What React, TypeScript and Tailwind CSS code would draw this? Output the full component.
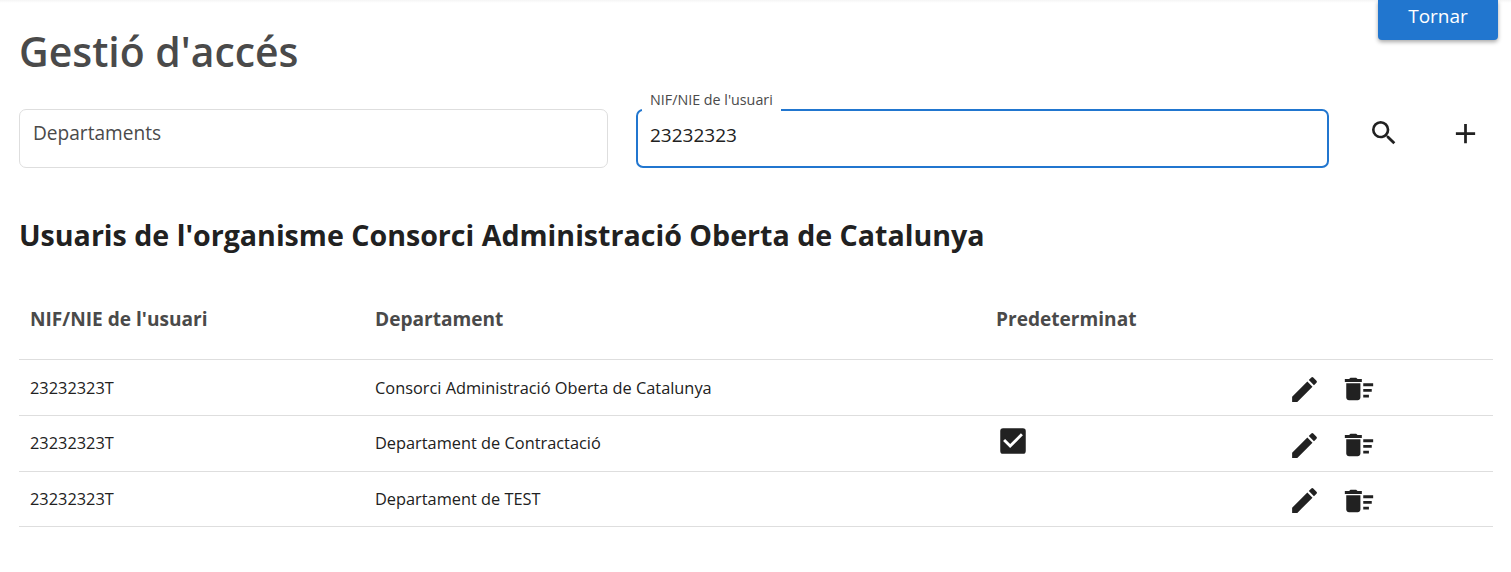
import { MdAdd, MdCheckBox, MdDeleteSweep, MdEdit, MdSearch } from "react-icons/md";

const rows = [
  { nif: "23232323T", dept: "Consorci Administració Oberta de Catalunya", def: false, h: "h-[56px]", pad: "pt-[1px]" },
  { nif: "23232323T", dept: "Departament de Contractació", def: true, h: "h-[56px]", pad: "" },
  { nif: "23232323T", dept: "Departament de TEST", def: false, h: "h-[55px]", pad: "" },
];

export default function App() {
  return (
    <div className="relative h-[572px] w-[1511px] overflow-hidden bg-white font-['Open_Sans',sans-serif] text-[#212121]">
      <div className="h-[3px] bg-gradient-to-b from-[#f5f5f5] to-white" />
      <div className="flex items-start justify-between pl-[19px] pr-[13px]">
        <h1 className="mt-[21px] text-[40.9px] leading-[54px] font-semibold text-[#4a4a4a]">Gestió d'accés</h1>
        <button className="-mt-[3px] h-[40px] w-[120px] rounded-b-[4px] bg-[#2176cf] pb-[9px] text-[19px] leading-[26px] text-white shadow-[0_2px_4px_rgba(0,0,0,0.35)]">
          Tornar
        </button>
      </div>

      <div className="mt-[31px] flex items-start pl-[19px]">
        <div className="h-[59px] w-[589px] rounded-[7px] border border-[#dedede] px-[13px] pt-[11px] text-[19.1px] leading-[25px] text-[#4a4a4a]">
          Departaments
        </div>
        <div className="relative ml-[28px] flex h-[59px] w-[693px] items-center rounded-[7px] border-2 border-[#2176cf] px-[12px] pb-[6px] text-[19px] text-[#212121]">
          23232323
          <span className="absolute -top-[22px] left-[4px] bg-white px-[8px] text-[14.3px] leading-[22px] text-[#4a4a4a]">
            NIF/NIE de l'usuari
          </span>
        </div>
        <MdSearch className="ml-[39px] mt-[8px] text-[32px]" />
        <MdAdd className="ml-[49px] mt-[8px] text-[33px]" />
      </div>

      <h2 className="ml-[19px] mt-[48px] text-[28.6px] leading-[37px] font-bold text-[#212121]">
        Usuaris de l'organisme Consorci Administració Oberta de Catalunya
      </h2>

      <div className="ml-[19px] mt-[29px] w-[1474px] text-[16.35px]">
        <div className="grid h-[78px] grid-cols-[345px_621px_294px_1fr] items-center border-b border-[#dedede] pb-[3px] pl-[11px] text-[19.1px] font-bold text-[#4a4a4a]">
          <div>NIF/NIE de l'usuari</div>
          <div>Departament</div>
          <div>Predeterminat</div>
          <div />
        </div>
        {rows.map((r, i) => (
          <div
            key={i}
            className={`grid ${r.h} grid-cols-[345px_621px_294px_1fr] items-center border-b border-[#dedede] pl-[11px]`}
          >
            <div className={r.pad}>{r.nif}</div>
            <div className={r.pad}>{r.dept}</div>
            <div>{r.def && <MdCheckBox className="-mt-[6px] text-[34px]" />}</div>
            <div className="-ml-[2px] flex items-center gap-[21px] pt-[3px]">
              <MdEdit className="text-[33px]" />
              <MdDeleteSweep className="text-[34px]" />
            </div>
          </div>
        ))}
      </div>
    </div>
  );
}
